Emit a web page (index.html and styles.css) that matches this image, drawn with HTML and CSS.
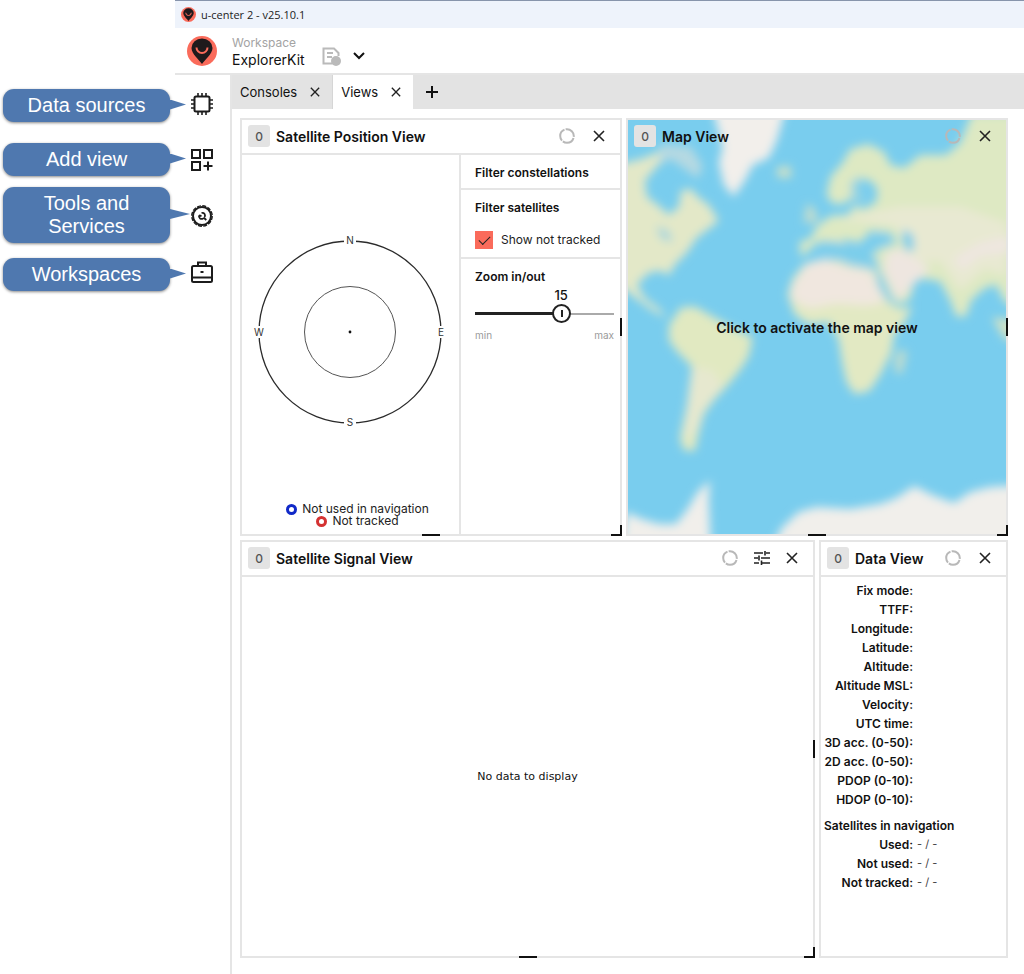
FILE: index.html
```html
<!DOCTYPE html>
<html lang="en">
<head>
<meta charset="utf-8">
<meta name="viewport" content="width=device-width, initial-scale=1">
<title>u-center 2 - v25.10.1</title>
<link rel="stylesheet" href="styles.css">
</head>
<body>
<svg class="sprite" aria-hidden="true">
  <symbol id="logo" viewBox="0 0 30 30">
    <circle cx="15" cy="15" r="15" fill="#fa6b5b"/>
    <path d="M15 28 C12.500 24 4.500 18 4.500 12 A10.500 9.500 0 0 1 25.500 12 C25.500 18 17.500 24 15 28Z" fill="#1f1a1c"/>
    <path d="M9.500 11.500 a5.500 5.500 0 0 0 11 0" fill="none" stroke="#fa6b5b" stroke-width="2"/>
  </symbol>
  <symbol id="close" viewBox="0 0 12 12">
    <path d="M1 1 L11 11 M11 1 L1 11" fill="none" stroke="currentColor" stroke-width="1.600"/>
  </symbol>
  <symbol id="ring" viewBox="0 0 16 16">
    <circle cx="8" cy="8" r="6.800" fill="none" stroke="#b8b8b8" stroke-width="2" stroke-dasharray="13.040 1.200" stroke-dashoffset="-2"/>
  </symbol>
</svg>
<div class="page">
  <div class="callouts">
    <div class="callout">Data sources</div>
    <div class="callout callout-add">Add view</div>
    <div class="callout callout-tools">Tools and Services</div>
    <div class="callout callout-work">Workspaces</div>
  </div>
  <div class="app">
    <div class="titlebar"><svg class="title-logo"><use href="#logo"/></svg><span>u-center 2 - v25.10.1</span></div>
    <header class="header">
      <svg class="brand"><use href="#logo"/></svg>
      <div class="workspace"><span class="workspace-label">Workspace</span><span class="workspace-name">ExplorerKit</span></div>
      <button class="icon-button" aria-label="Save workspace">
        <svg width="20" height="20" viewBox="0 0 20 20" fill="none" stroke="#bababa" stroke-width="2"><path d="M10 16.500H1.500V1.500H12L16.500 6V9"/><path d="M5 6h6M5 10h5" stroke-width="1.800"/><circle cx="14" cy="14" r="5" fill="#bababa" stroke="none"/></svg>
      </button>
      <button class="icon-button chevron" aria-label="Choose workspace">
        <svg width="12" height="8" viewBox="0 0 12 8" fill="none" stroke="#111" stroke-width="2"><path d="M1 1 L6 6 L11 1"/></svg>
      </button>
    </header>
    <div class="workarea">
      <nav class="sidebar">
        <button class="icon-button" aria-label="Data sources">
          <svg width="24" height="24" viewBox="0 0 24 24" fill="none" stroke="#1c1c1c" stroke-width="2"><rect x="4.500" y="4.500" width="15" height="15" rx="1.500"/><path d="M8 1v3M12 1v3M16 1v3M8 20v3M12 20v3M16 20v3M1 8h3M1 12h3M1 16h3M20 8h3M20 12h3M20 16h3" stroke-width="1.600"/></svg>
        </button>
        <button class="icon-button" aria-label="Add view">
          <svg width="24" height="24" viewBox="0 0 24 24" fill="none" stroke="#1c1c1c" stroke-width="2"><rect x="2" y="2" width="8" height="8"/><rect x="14" y="2" width="8" height="8"/><rect x="2" y="14" width="8" height="8"/><path d="M18 13.500v9M13.500 18h9"/></svg>
        </button>
        <button class="icon-button" aria-label="Tools and Services">
          <svg width="24" height="24" viewBox="0 0 24 24" fill="none" stroke="#1c1c1c" stroke-width="2"><circle cx="12" cy="12" r="9"/><circle cx="12" cy="12" r="10.200" stroke-width="1.400" stroke-dasharray="4 1.340"/><path d="M9 11.500c-.6 2.600 2 4.200 4.200 3M11.500 9c2.600-.8 4.200 1.600 3.200 4M9 11.500l2.500.5M13.500 13.500l2.800 2.500" stroke-width="1.800"/></svg>
        </button>
        <button class="icon-button" aria-label="Workspaces">
          <svg width="24" height="24" viewBox="0 0 24 24" fill="none" stroke="#1c1c1c" stroke-width="2"><rect x="2" y="6" width="20" height="16" rx="1.500"/><path d="M8 6V2.500h8V6M2 17.500h20M10.500 12h3"/></svg>
        </button>
      </nav>
      <div class="content">
        <div class="tabs">
          <div class="tab"><button class="tab-label">Consoles</button><button class="icon-button" aria-label="Close Consoles"><svg class="x-small"><use href="#close"/></svg></button></div>
          <div class="tab tab-active"><button class="tab-label">Views</button><button class="icon-button" aria-label="Close Views"><svg class="x-small"><use href="#close"/></svg></button></div>
          <button class="icon-button tab-add" aria-label="Add tab"><svg width="12" height="12" viewBox="0 0 12 12" stroke="#111" stroke-width="2"><path d="M6 0v12M0 6h12"/></svg></button>
        </div>
        <main class="views">
          <div class="row row-top">
            <section class="panel">
              <div class="panel-head">
                <span class="badge">0</span><h2>Satellite Position View</h2>
                <svg class="ring"><use href="#ring"/></svg>
                <button class="icon-button" aria-label="Close Satellite Position View"><svg class="x"><use href="#close"/></svg></button>
              </div>
              <div class="position-body">
                <div class="sky">
                  <svg class="sky-plot" viewBox="0 0 204 204">
                    <circle cx="102" cy="102" r="91" fill="none" stroke="#2b2b2b" stroke-width="1.300"/>
                    <circle cx="102" cy="102" r="45.500" fill="none" stroke="#555" stroke-width="1"/>
                    <circle cx="102" cy="102" r="1.400" fill="#111"/>
                    <g fill="#fff"><rect x="96" y="5" width="12" height="12"/><rect x="96" y="187" width="12" height="12"/><rect x="5" y="96" width="12" height="12"/><rect x="187" y="96" width="12" height="12"/></g>
                    <g class="compass"><text x="102" y="14">N</text><text x="193" y="106">E</text><text x="102" y="196">S</text><text x="11" y="106">W</text></g>
                  </svg>
                  <ul class="legend">
                    <li><i class="dot dot-blue"></i>Not used in navigation</li>
                    <li><i class="dot dot-red"></i>Not tracked</li>
                  </ul>
                </div>
                <div class="filters">
                  <div class="filter"><h3>Filter constellations</h3></div>
                  <div class="filter"><h3>Filter satellites</h3>
                    <label class="check"><input type="checkbox" checked>Show not tracked</label>
                  </div>
                  <div class="filter filter-zoom"><h3><label for="zoom">Zoom in/out</label></h3>
                    <div class="slider"><output for="zoom" style="left:62%">15</output><input id="zoom" type="range" min="6" max="20" value="15"></div>
                    <div class="limits"><span>min</span><span>max</span></div>
                  </div>
                </div>
              </div>
              <i class="grip grip-bottom"></i><i class="grip grip-right"></i><i class="grip grip-corner"></i>
            </section>
            <section class="panel map-panel">
              <svg class="map" viewBox="627 119 379 415" preserveAspectRatio="none" aria-hidden="true">
                <defs><filter id="soft" x="-10%" y="-10%" width="120%" height="120%"><feGaussianBlur stdDeviation="4.800"/></filter></defs>
                <rect x="627" y="119" width="379" height="415" fill="#79cdee"/>
                <g filter="url(#soft)">
                  <path fill="#f2efeb" d="M711 105H786L776 140L768 157L752 164L744 180L733 196L723 184L718 162L722 146Z"/>
                  <path fill="#b5d9e2" d="M660 143L690 146L702 165L697 178L684 168L670 158L655 165Z"/>
                  <path fill="#e3e8c8" d="M610 165L640 158L660 150L658 163L644 180L646 196L658 205L668 214L678 206L680 190L690 188L698 197L708 204L718 220L708 228L696 237L686 252L674 264L668 275L660 270L648 272L636 284L644 298L658 308L666 318L650 309L630 294L610 280Z"/>
                  <path fill="#a9d7dc" d="M655 225L668 230L672 242L660 238Z"/>
                  <path fill="#e1e9c1" d="M668 325L680 307L694 306L712 316L728 325L752 337L748 356L739 370L727 385L713 400L703 414L698 432L694 451L683 450L679 438L685 410L691 390L691 366L677 352L668 340Z"/>
                  <path fill="#e6e8cf" d="M691 366L712 370L722 386L703 410L696 430L683 440L686 405Z"/>
                  <path fill="#cae0c9" d="M776 166L790 165L791 177L777 177Z"/>
                  <path fill="#bfdccf" d="M806 203L814 207L818 222L803 222Z"/>
                  <path fill="#dee9c3" d="M826 194L830 176L842 162L850 148L868 143L884 151L890 164L904 167L920 154L946 154L960 142L972 112H1020V312L1004 300L996 284L984 288L971 300L966 316L956 316L950 300L940 281L922 278L914 282L910 298L900 304L890 296L878 268L872 252L884 246L896 242L890 232L870 230L860 242L850 240L842 238L848 254L836 248L826 240L816 242L806 252L800 256L799 241L810 238L816 226L830 215L848 214L853 205L864 208L876 201L877 188L870 180L859 177L856 192L844 203L832 203Z"/>
                  <path fill="#9dd5e0" d="M850 182L858 176L862 180L856 191L866 197L852 202Z"/>
                  <path fill="#e8e9d2" d="M836 218L900 206L960 206L1006 222V275L985 268L960 290L940 260L915 262L895 225Z"/>
                  <path fill="#eee6e0" d="M953 258L980 242L1010 235V252L980 255L962 270ZM886 252L901 248L930 268L912 285L898 300L884 270Z"/>
                  <path fill="#e2e9c3" d="M787 294L792 278L804 263L822 258L838 259L850 264L872 268L882 280L890 302L900 308L912 306L903 324L894 333L891 352L880 374L869 391L854 394L846 382L842 364L838 338L829 322L808 324L794 314Z"/>
                  <path fill="#f0e7df" d="M791 287L806 263L824 258L846 266L870 270L884 302L866 305L836 303L810 308L792 300Z"/>
                  <path fill="#7dceea" d="M820 245L833 240L850 246L866 252L880 260L868 264L850 260L836 252L820 251ZM868 239L880 231L892 240L877 244ZM904 228L913 235L914 250L906 250L901 239ZM874 265L881 273L894 301L889 303L878 286Z"/>
                  <path fill="#bddccf" d="M900 348L907 352L902 373L895 373L894 358Z"/>
                  <path fill="#d2e2c5" d="M992 317L1020 320V343L1004 338Z"/>
                  <path fill="#f1efeb" d="M625 512L641 519L658 524L675 524L686 510L697 492L709 480L708 500L710 550H620ZM770 550L781 528L798 512L816 507L850 509L880 504L896 498L914 486L932 495L954 503L970 492L990 487L1020 485V550Z"/>
                </g>
              </svg>
              <div class="panel-head">
                <span class="badge">0</span><h2>Map View</h2>
                <svg class="ring"><use href="#ring"/></svg>
                <button class="icon-button" aria-label="Close Map View"><svg class="x"><use href="#close"/></svg></button>
              </div>
              <button class="map-activate">Click to activate the map view</button>
              <i class="grip grip-bottom"></i><i class="grip grip-right"></i><i class="grip grip-corner"></i>
            </section>
          </div>
          <div class="row row-bottom">
            <section class="panel">
              <div class="panel-head">
                <span class="badge">0</span><h2>Satellite Signal View</h2>
                <svg class="ring"><use href="#ring"/></svg>
                <button class="icon-button settings" aria-label="Signal view settings"><svg width="16" height="14" viewBox="0 0 16 14" fill="none" stroke="#222" stroke-width="1.600"><path d="M0 2h9M12 2h4M0 7h4M7 7h9M0 12h5M8 12h8M11 0v4.500M5 4.500v5M7.500 9.500V14"/></svg></button>
                <button class="icon-button" aria-label="Close Satellite Signal View"><svg class="x"><use href="#close"/></svg></button>
              </div>
              <p class="empty">No data to display</p>
              <i class="grip grip-bottom"></i><i class="grip grip-right"></i><i class="grip grip-corner"></i>
            </section>
            <section class="panel">
              <div class="panel-head">
                <span class="badge">0</span><h2>Data View</h2>
                <svg class="ring"><use href="#ring"/></svg>
                <button class="icon-button" aria-label="Close Data View"><svg class="x"><use href="#close"/></svg></button>
              </div>
              <table class="data">
                <tbody>
                  <tr><th>Fix mode:</th><td></td></tr>
                  <tr><th>TTFF:</th><td></td></tr>
                  <tr><th>Longitude:</th><td></td></tr>
                  <tr><th>Latitude:</th><td></td></tr>
                  <tr><th>Altitude:</th><td></td></tr>
                  <tr><th>Altitude MSL:</th><td></td></tr>
                  <tr><th>Velocity:</th><td></td></tr>
                  <tr><th>UTC time:</th><td></td></tr>
                  <tr><th>3D acc. (0-50):</th><td></td></tr>
                  <tr><th>2D acc. (0-50):</th><td></td></tr>
                  <tr><th>PDOP (0-10):</th><td></td></tr>
                  <tr><th>HDOP (0-10):</th><td></td></tr>
                </tbody>
                <tbody>
                  <tr><th class="group" colspan="2">Satellites in navigation</th></tr>
                  <tr><th>Used:</th><td>- / -</td></tr>
                  <tr><th>Not used:</th><td>- / -</td></tr>
                  <tr><th>Not tracked:</th><td>- / -</td></tr>
                </tbody>
              </table>
            </section>
          </div>
        </main>
      </div>
    </div>
  </div>
</div>
</body>
</html>
```
FILE: styles.css
```css
* { box-sizing: border-box; }
body { margin: 0; background: #fff; color: #111; font-family: Inter, "Liberation Sans", sans-serif; font-size: 12px; }
h2, h3, p, ul { margin: 0; padding: 0; }
button { border: 0; padding: 0; background: none; color: inherit; font: inherit; cursor: pointer; }
svg { display: block; }
.sprite { position: absolute; width: 0; height: 0; }
.icon-button { display: grid; place-items: center; flex: none; }

.page { display: flex; min-height: 100vh; }

.callouts { flex: none; width: 175px; padding: 89px 5px 0 3px; display: flex; flex-direction: column; }
.callout { position: relative; padding: 5px 24px; border-radius: 11px; background: #4f78af; box-shadow: 0 1px 3px #0007; color: #fff; font-family: "Liberation Sans", Arial, sans-serif; font-size: 20px; line-height: 23px; text-align: center; white-space: nowrap; }
.callout::after { content: ""; position: absolute; left: 100%; top: 50%; width: 16px; height: 10px; margin-top: -6px; background: #4f78af; clip-path: polygon(0 0, 100% 50%, 0 100%); }
.callout-add { margin-top: 21px; }
.callout-tools { margin-top: 11px; white-space: normal; }
.callout-tools::after { width: 20px; }
.callout-work { margin-top: 15px; }

.app { flex: 1; min-width: 0; display: flex; flex-direction: column; }
.titlebar { display: flex; align-items: center; gap: 5px; height: 28px; padding-left: 6px; border-top: 1px solid #8794ab; background: #eef3fb; color: #222; font-family: "Open Sans", "Noto Sans", sans-serif; font-size: 11px; }
.title-logo { width: 15px; height: 15px; }
.header { display: flex; align-items: center; height: 47px; padding-left: 12px; border-bottom: 2px solid #e5e5e5; }
.brand { width: 30px; height: 30px; margin-right: 15px; }
.workspace { display: flex; flex-direction: column; margin-right: 17px; line-height: 17px; }
.workspace-label { color: #a3a3a3; font-size: 12px; }
.workspace-name { font-size: 14px; }
.header .icon-button { padding-top: 12px; }
.header .chevron { margin-left: 11px; padding-top: 10px; }

.workarea { flex: 1; display: flex; }
.sidebar { flex: none; width: 57px; padding: 17px 2px 0 0; display: flex; flex-direction: column; align-items: center; gap: 32px; border-right: 2px solid #e5e5e5; }
.content { flex: 1; min-width: 0; display: flex; flex-direction: column; }
.tabs { display: flex; height: 34px; background: #e3e3e3; }
.tab { display: flex; align-items: center; gap: 13px; padding: 0 12px 0 8px; border-right: 1px solid #d6d6d6; font-size: 13px; }
.tab-active { background: #fff; border-right: 0; }
.tab-add { padding: 0 13px; }
.x-small { width: 10px; height: 10px; color: #222; }
.x { width: 12px; height: 12px; color: #222; }

.views { flex: 1; display: grid; grid-template-rows: 1fr 1fr; gap: 4px; padding: 9px 16px 16px 8px; }
.row { display: grid; gap: 4px; }
.row-top { grid-template-columns: 1fr 1fr; }
.row-bottom { grid-template-columns: minmax(0, 575fr) minmax(0, 189fr); }
.panel { position: relative; display: flex; flex-direction: column; min-width: 0; border: 2px solid #e5e5e5; }
.panel-head { display: flex; align-items: center; height: 35px; padding: 0 15px 1px 6px; border-bottom: 2px solid #e5e5e5; }
.badge { display: grid; place-items: center; width: 22px; height: 22px; margin-right: 6px; border-radius: 3px; background: #e3e3e3; color: #555; font-weight: 500; }
h2 { flex: 1; font-size: 14px; font-weight: 600; white-space: nowrap; }
.ring { flex: none; width: 16px; height: 16px; margin-right: 18px; }
.ring:has(+ .settings) { margin-right: 16px; }
.settings { margin-right: 16px; }

.position-body { flex: 1; display: flex; }
.sky { flex: 1; display: flex; flex-direction: column; align-items: center; justify-content: space-between; padding: 5px 2px 7px 0; }
.sky-plot { width: 204px; max-width: 100%; margin: auto; }
.compass { fill: #333; font-size: 10px; text-anchor: middle; }
.legend { list-style: none; padding-left: 16px; line-height: 12px; color: #222; }
.legend li { display: flex; align-items: center; justify-content: center; gap: 5px; }
.dot { width: 11px; height: 11px; border: 3px solid; border-radius: 50%; }
.dot-blue { border-color: #1029c8; }
.dot-red { border-color: #d43232; }
.filters { flex: none; width: 161px; border-left: 2px solid #e5e5e5; }
.filter { padding: 10px 0 8px 14px; border-bottom: 2px solid #e5e5e5; }
.filter-zoom { padding-right: 6px; border-bottom: 0; }
h3 { font-size: 12px; font-weight: 600; line-height: 15px; }
.check { display: flex; align-items: center; gap: 8px; margin-top: 16px; color: #222; line-height: 18px; }
.check input { appearance: none; width: 18px; height: 18px; margin: 0; background: #fa6b5b; display: grid; place-items: center; }
.check input:checked::after { content: ""; width: 10px; height: 5px; border: solid #222; border-width: 0 0 1px 1px; transform: translateY(-1px) rotate(-45deg); }
.slider { position: relative; padding-top: 20px; }
.slider output { position: absolute; top: 3px; transform: translateX(-50%); font-size: 13px; line-height: 16px; font-weight: 500; }
.slider input { appearance: none; display: block; width: 100%; height: 19px; margin: 0; background: linear-gradient(#222, #222) 0 50% / 62% 3px no-repeat, linear-gradient(#aaa, #aaa) 0 50% / 100% 2px no-repeat; }
.slider input::-webkit-slider-thumb { appearance: none; width: 19px; height: 19px; border: 2px solid #222; border-radius: 50%; background: linear-gradient(#222, #222) center / 2px 7px no-repeat #fff; }
.limits { display: flex; justify-content: space-between; margin-top: 5px; color: #9a9a9a; font-size: 10px; line-height: 15px; }

.map { position: absolute; inset: 0; width: 100%; height: 100%; }
.map-panel .panel-head { position: relative; border-color: transparent; }
.map-activate { position: absolute; inset: 35px 0; font-size: 14px; font-weight: 600; }
.empty { flex: 1; display: grid; place-items: center; padding-top: 20px; font-family: "DejaVu Sans", Verdana, sans-serif; font-size: 11px; }

.data { border-collapse: collapse; table-layout: fixed; width: 100%; margin-top: 4px; line-height: 19px; }
.data th { width: 92px; padding: 0; text-align: right; font-weight: 600; white-space: nowrap; }
.data td { padding: 0 0 0 4px; color: #444; font-size: 11px; }
.data .group { width: auto; padding: 7px 0 0 3px; text-align: left; }

.grip { position: absolute; background: #111; }
.grip-bottom { left: 50%; bottom: -2px; width: 18px; height: 2px; margin-left: -9px; }
.grip-right { right: -2px; top: 50%; width: 2px; height: 18px; margin-top: -9px; }
.grip-corner { right: -2px; bottom: -2px; width: 11px; height: 11px; border: solid #111; border-width: 0 2px 2px 0; background: none; }
```
